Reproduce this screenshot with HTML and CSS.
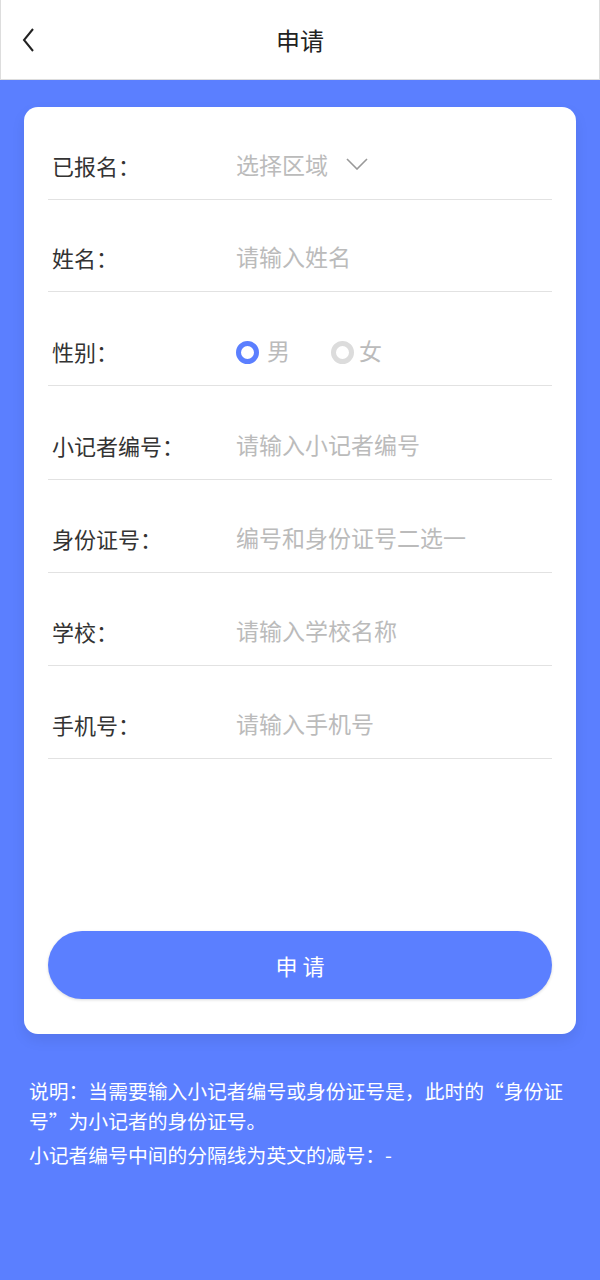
FILE: index.html
```html
<!DOCTYPE html>
<html lang="zh-CN">
  <head>
    <meta charset="UTF-8" />
    <meta name="viewport" content="width=device-width, initial-scale=1.0" />
    <title>申请</title>
    <link rel="stylesheet" href="styles.css">
  </head>
  <body>
    <div class="header">
      <span class="back">
        <svg width="14" height="26" viewBox="0 0 14 26"><path d="M11 2 L2 13 L11 24" fill="none" stroke="#222" stroke-width="2"/></svg>
      </span>
      <h1>申请</h1>
    </div>

    <div class="page">
      <form class="card">
        <div class="row">
          <label>已报名：</label>
          <div class="value placeholder">选择区域
            <svg class="arrow" width="22" height="12" viewBox="0 0 22 12"><path d="M1 1 L11 11 L21 1" fill="none" stroke="#999" stroke-width="1.6"/></svg>
          </div>
        </div>
        <div class="row">
          <label>姓名：</label>
          <div class="value placeholder">请输入姓名</div>
        </div>
        <div class="row">
          <label>性别：</label>
          <div class="value">
            <span class="radio checked"></span><span class="placeholder">男</span>
            <span class="radio gap"></span><span class="placeholder">女</span>
          </div>
        </div>
        <div class="row">
          <label>小记者编号：</label>
          <div class="value placeholder">请输入小记者编号</div>
        </div>
        <div class="row">
          <label>身份证号：</label>
          <div class="value placeholder">编号和身份证号二选一</div>
        </div>
        <div class="row">
          <label>学校：</label>
          <div class="value placeholder">请输入学校名称</div>
        </div>
        <div class="row">
          <label>手机号：</label>
          <div class="value placeholder">请输入手机号</div>
        </div>

        <button type="button" class="submit-button">申 请</button>
      </form>

      <div class="note">
        <p>说明：当需要输入小记者编号或身份证号是，此时的“身份证号”为小记者的身份证号。</p>
        <p>小记者编号中间的分隔线为英文的减号：-</p>
      </div>
    </div>
  </body>
</html>
```

FILE: styles.css
```css
body {
  font-family: "Noto Sans CJK SC", "Noto Sans", sans-serif;
  margin: 0;
  padding: 0;
  background-color: #5b7fff;
  min-height: 1280px;
}
.header {
  height: 79px;
  background-color: #fff;
  border-bottom: 1px solid #ddd;
  border-left: 1px solid #ddd;
  border-right: 1px solid #ddd;
  display: flex;
  align-items: center;
  justify-content: center;
  position: relative;
}
.header h1 {
  margin: 0;
  font-size: 24px;
  font-weight: normal;
  color: #222;
}
.back {
  position: absolute;
  left: 21px;
  top: 27px;
}
.page {
  padding: 27px 24px 0;
}
.card {
  background-color: #fff;
  border-radius: 14px;
  padding: 0 24px 35px;
  box-shadow: 0 6px 14px rgba(0, 0, 0, 0.08);
}
.row {
  height: 93px;
  border-bottom: 1px solid #e2e2e2;
  display: flex;
  align-items: flex-end;
  padding-bottom: 18px;
  box-sizing: border-box;
  font-size: 22px;
}
.row:nth-child(2) {
  height: 92px;
}
.row:nth-child(3),
.row:nth-child(4) {
  height: 94px;
}
.row label {
  width: 184px;
  padding-left: 4px;
  color: #333;
}
.value {
  display: flex;
  align-items: center;
  font-size: 23px;
}
.placeholder {
  color: #bbb;
}
.arrow {
  margin-left: 18px;
}
.radio {
  width: 13px;
  height: 13px;
  border-radius: 50%;
  border: 5px solid #dcdcdc;
  margin-right: 8px;
  margin-top: 4px;
}
.radio.checked {
  border-color: #5b7fff;
}
.radio.gap {
  margin-left: 41px;
  margin-right: 5px;
}
.submit-button {
  display: block;
  width: 100%;
  height: 68px;
  margin-top: 172px;
  border: none;
  border-radius: 34px;
  background-color: #5b7fff;
  color: #fff;
  font-family: inherit;
  font-size: 22px;
  box-shadow: 0 1px 3px rgba(0, 0, 0, 0.15);
}
.note {
  padding: 42px 2px 0 5px;
  color: #fff;
  font-size: 19.8px;
  line-height: 30px;
}
.note p {
  margin: 0 0 4px;
}
```
